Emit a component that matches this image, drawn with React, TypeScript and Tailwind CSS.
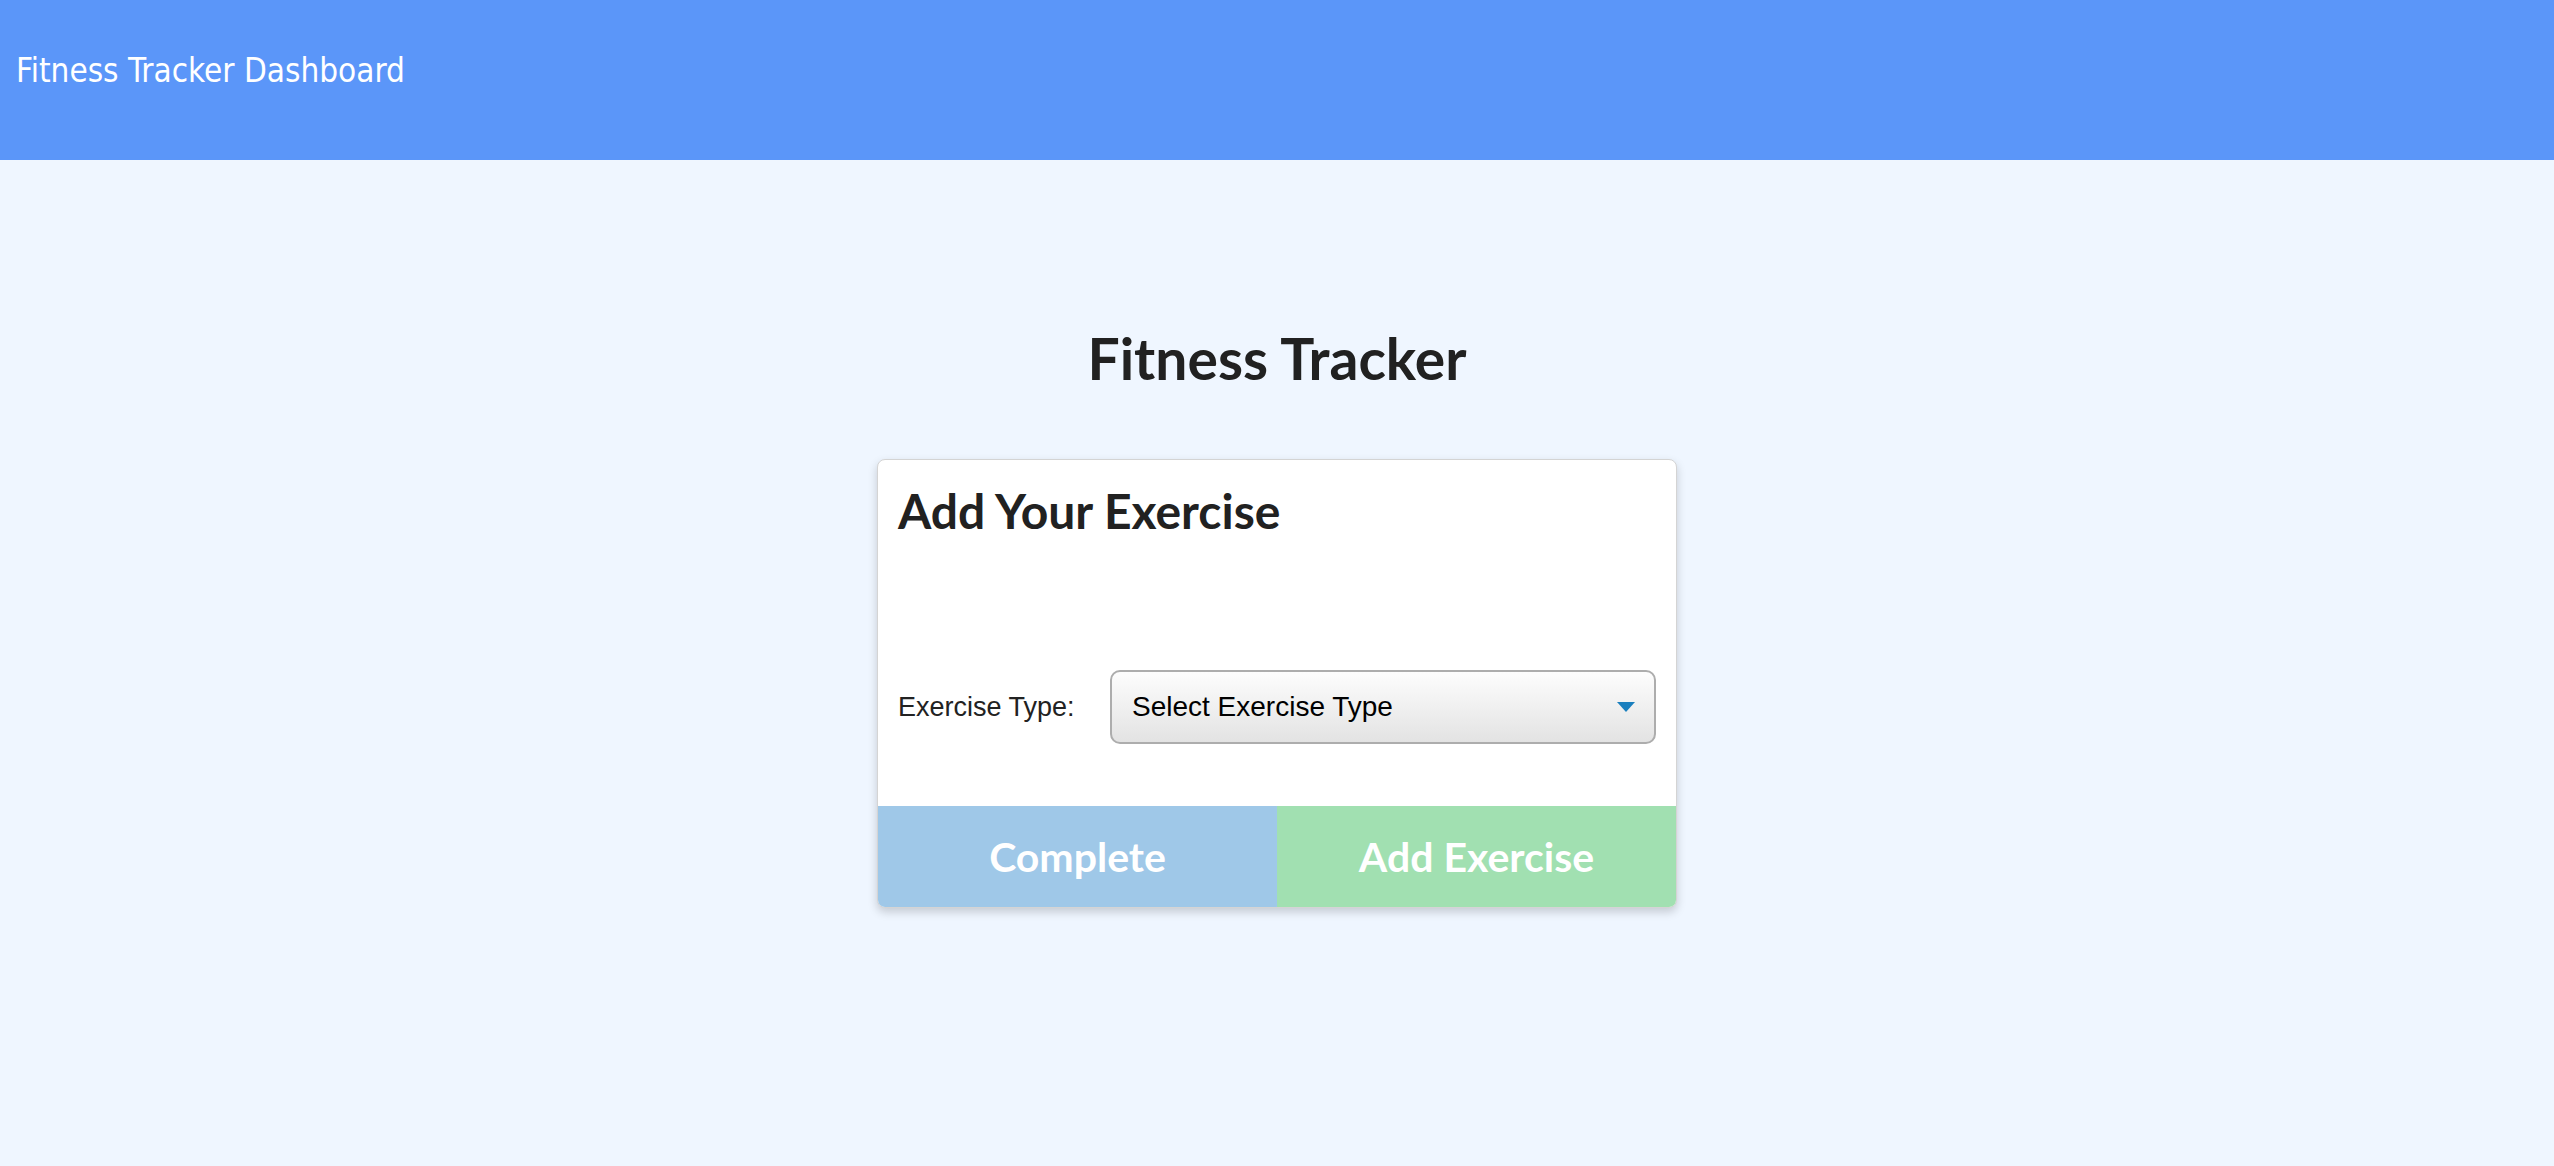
import React from "react";

export default function App() {
  return (
    <div className="min-h-[1166px] w-full bg-[#eff6ff]">
      <header className="flex h-[160px] items-center bg-[#5b96f9] px-[16px] pb-[18px]">
        <h1
          className="text-[33px] leading-[40px] text-white"
          style={{ fontFamily: '"DejaVu Sans Condensed", "DejaVu Sans", sans-serif' }}
        >
          Fitness Tracker Dashboard
        </h1>
      </header>
      <main className="flex flex-col items-center">
        <h2
          className="mt-[168px] text-[57px] font-bold leading-[60px] text-[#212121]"
          style={{ fontFamily: 'Lato, sans-serif' }}
        >
          Fitness Tracker
        </h2>
        <div className="mt-[71px] flex w-[800px] flex-col overflow-hidden rounded-[8px] border border-[#d4d4d4] bg-white shadow-[0_4px_10px_rgba(0,0,0,0.18)]">
          <div className="px-[20px] pt-[24px]">
            <h3
              className="text-[48px] font-bold leading-[54px] text-[#212121]"
              style={{ fontFamily: 'Lato, sans-serif' }}
            >
              Add Your Exercise
            </h3>
          </div>
          <div className="mt-[132px] flex items-center px-[20px]" style={{ fontFamily: '"Liberation Sans", Arial, sans-serif' }}>
            <label className="w-[212px] text-[27px] text-[#222]">Exercise Type:</label>
            <div className="relative flex h-[74px] flex-1 items-center rounded-[10px] border-2 border-[#adadad] bg-gradient-to-b from-[#fdfdfd] to-[#e3e3e3] pl-[20px]">
              <span className="text-[28px] text-black">Select Exercise Type</span>
              <svg className="absolute right-[19px] top-1/2 -translate-y-1/2" width="18" height="10" viewBox="0 0 18 10">
                <polygon points="0,0 18,0 9,10" fill="#1a7fbe" />
              </svg>
            </div>
          </div>
          <div className="mt-[62px] flex h-[101px]" style={{ fontFamily: 'Lato, sans-serif' }}>
            <button className="flex flex-1 items-center justify-center bg-[#9fc8e8] text-[41px] font-bold text-white">
              Complete
            </button>
            <button className="flex flex-1 items-center justify-center bg-[#a1e0b1] text-[41px] font-bold text-white">
              Add Exercise
            </button>
          </div>
        </div>
      </main>
    </div>
  );
}
